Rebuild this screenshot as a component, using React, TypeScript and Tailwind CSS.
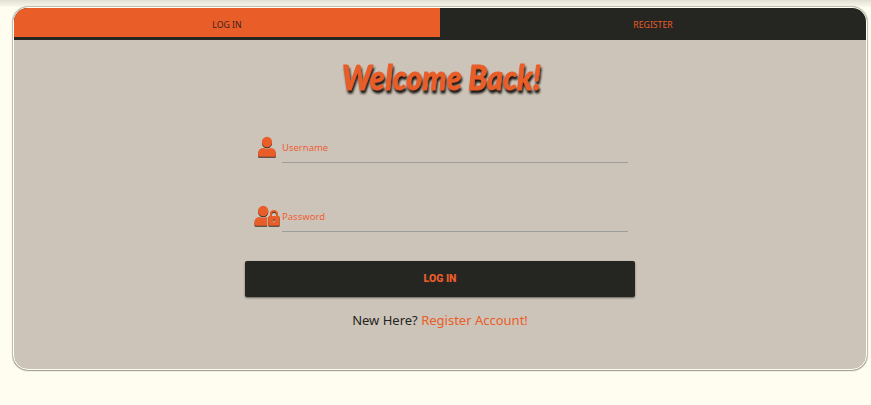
import type { ReactNode } from "react";

function UserIcon() {
  return (
    <svg width="26" height="24" viewBox="0 0 26 24" fill="currentColor">
      <ellipse cx="13" cy="6" rx="5.1" ry="5.2" />
      <path d="M4.1 20V17.6Q4.3 12.4 9 12.1Q13 13.4 17 12.1Q21.7 12.4 21.9 17.6V20Q21.9 20.8 21 20.8H5Q4.1 20.8 4.1 20Z" />
    </svg>
  );
}

function UserLockIcon() {
  return (
    <svg width="26" height="24" viewBox="0 0 26 24" fill="currentColor">
      <ellipse cx="9.2" cy="6" rx="5.1" ry="5.2" />
      <path d="M.5 19.6V17.4Q.7 12.4 5.2 12.1Q9.2 13.4 13.1 12.1V20.8H1.6Q.5 20.8 .5 19.6Z" />
      <path d="M16.9 11.8V9.1a3.1 3.2 0 0 1 6.2 0V11.8" fill="none" stroke="currentColor" strokeWidth="1.9" />
      <path fillRule="evenodd" d="M15.4 11.1H24.6Q25.7 11.1 25.7 12.2V19.7Q25.7 20.8 24.6 20.8H15.4Q14.3 20.8 14.3 19.7V12.2Q14.3 11.1 15.4 11.1ZM19.2 14.6V17.4H20.8V14.6Z" />
    </svg>
  );
}

function Field({ icon, label, type }: { icon: ReactNode; label: string; type: string }) {
  return (
    <label className="flex h-[31px] w-[374px] items-start">
      <span className="flex w-[26px] shrink-0 text-[#e95d29] drop-shadow-[0_1px_0.5px_rgba(35,20,12,0.85)]">{icon}</span>
      <span className="relative ml-[2px] block h-[27px] grow border-b border-[#9e9e9e]">
        <span className="absolute left-0 top-[5px] text-[9.5px] leading-[14px] text-[#ee6038]">{label}</span>
        <input type={type} aria-label={label} className="h-full w-full bg-transparent outline-none" />
      </span>
    </label>
  );
}

export default function App() {
  return (
    <main className="h-[405px] w-[871px] overflow-hidden bg-[#fffcf0] font-['Noto_Sans','Open_Sans',sans-serif]">
      <div className="h-[7px] bg-linear-to-b from-[#e1dfd3] to-[#fbf8ec]" />
      <section className="ml-[13px] flex h-[363px] w-[854px] flex-col overflow-hidden rounded-[15px] border border-[#fffdf4] bg-[#ccc4b8] shadow-[0_0_1px_1px_rgba(90,88,78,0.4),0_1px_1px_rgba(0,0,0,0.2)]">
        <nav className="flex h-8 shrink-0 bg-[#252522] text-[8.7px] leading-[34px]">
          <a className="h-[29px] w-1/2 bg-[#e95d29] text-center text-[#3b221b]">LOG IN</a>
          <a className="h-8 w-1/2 text-center text-[#e95d29]">REGISTER</a>
        </nav>
        <h1 className="mt-[12px] ml-[320px] h-[56px] w-[220px]">
          <svg width="220" height="56" viewBox="0 0 220 56" className="overflow-visible drop-shadow-[1px_3px_1px_#191411]">
            <text x="8" y="37.5" textLength="199" lengthAdjust="spacingAndGlyphs" strokeWidth="0.8" strokeLinejoin="round" className="fill-[#e95d29] stroke-[#e95d29] font-['Lato',sans-serif] text-[34px] font-black italic">Welcome Back!</text>
          </svg>
        </h1>
        <form className="flex flex-col" onSubmit={(e) => e.preventDefault()}>
          <div className="ml-[240px] pt-[28px]"><Field icon={<UserIcon />} label="Username" type="text" /></div>
          <div className="ml-[240px] mt-[38px]"><Field icon={<UserLockIcon />} label="Password" type="password" /></div>
          <button className="ml-[231px] mt-[25px] h-9 w-[390px] rounded-[2px] bg-[#252522] font-['Roboto',sans-serif] text-[10.5px] font-black text-[#e95d29] shadow-[0_1px_2px_rgba(0,0,0,0.5)]">LOG IN</button>
        </form>
        <p className="mt-[13px] text-center text-[13px] leading-[20px] text-[#252522]">New Here? <a className="text-[#e95d29]">Register Account!</a></p>
      </section>
    </main>
  );
}
